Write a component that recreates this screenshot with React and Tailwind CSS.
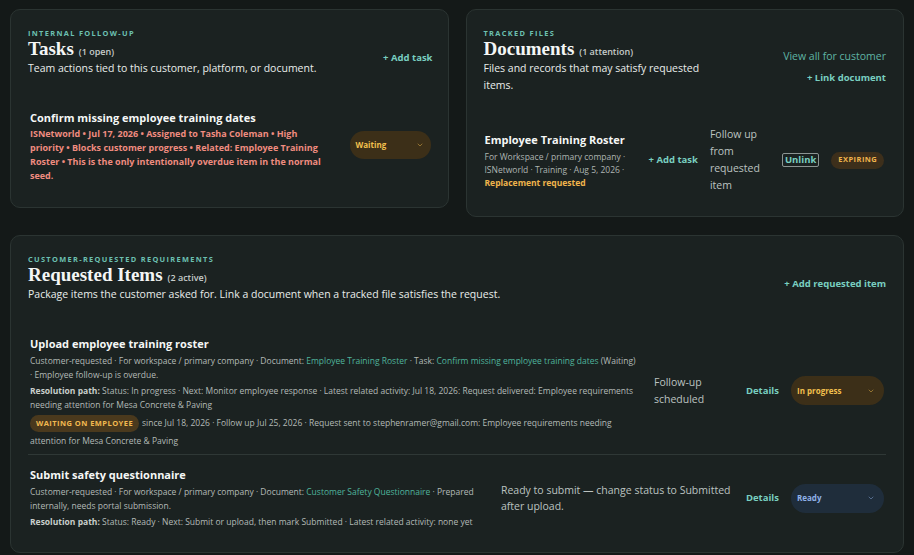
import React from 'react';
import { ChevronDown } from 'lucide-react';

const sans = "font-['Open_Sans','Noto_Sans',sans-serif]";
const serif = "font-['Liberation_Serif','Times_New_Roman',serif]";

const Eyebrow = ({ children }) => (
    <div className="text-[7.4px] leading-[10px] font-bold uppercase tracking-[0.18em] text-[#6cc0b1]">{children}</div>
);

const CardTitle = ({ title, count }) => (
    <div className="flex items-baseline gap-[5px]">
        <h2 className={`${serif} text-[19px] leading-[22px] font-bold text-[#f4f6f5]`}>{title}</h2>
        <span className="text-[9px] font-semibold text-[#c7cdcb]">{count}</span>
    </div>
);

const ActionLink = ({ children, className = '' }) => (
    <button className={`text-[9.5px] leading-[14px] font-bold text-[#79cfc0] whitespace-nowrap ${className}`}>{children}</button>
);

const StatusSelect = ({ label, tone }) => {
    const styles = {
        amber: 'bg-[#3c2f18] text-[#f3c04e]',
        blue: 'bg-[#1f2d3b] text-[#8fb1e8]',
    };
    return (
        <button className={`h-[29px] w-[93px] shrink-0 rounded-full flex items-center justify-between pl-[6px] pr-[9px] text-[8px] font-bold ${styles[tone]}`}>
            <span>{label}</span>
            <ChevronDown size={8} strokeWidth={2} className="opacity-70" />
        </button>
    );
};

const Card = ({ children, className = '' }) => (
    <section className={`rounded-[10px] border border-[#2b3432] bg-[#1b2221] px-[17px] pt-[18px] ${className}`}>
        {children}
    </section>
);

const Link = ({ children }) => <span className="text-[#4fb49c]">{children}</span>;

export default function App() {
    return (
        <div className={`${sans} min-h-screen w-full bg-[#141918] px-[10px] pt-[9px] pb-[4px] text-[#e9edeb]`}>
            <div className="grid grid-cols-2 gap-x-[17px] items-start">
                {/* tasks */}
                <Card className="pb-[12px] pr-[15px]">
                    <div className="flex justify-between items-start">
                        <div>
                            <Eyebrow>Internal follow-up</Eyebrow>
                            <CardTitle title="Tasks" count="(1 open)" />
                            <p className="text-[10.5px] leading-[17px] text-[#e9edeb]">Team actions tied to this customer, platform, or document.</p>
                        </div>
                        <ActionLink className="mt-[23px]">+ Add task</ActionLink>
                    </div>
                    <div className="mt-[21px]">
                        <div className="flex items-center gap-[24px] px-[2px] py-[12px]">
                            <div className="flex-1 min-w-0">
                                <div className="text-[11px] leading-[16px] font-bold text-[#f5f7f6]">Confirm missing employee training dates</div>
                                <p className="mt-[1px] text-[9px] leading-[14px] font-bold text-[#f08c80]">
                                    ISNetworld • Jul 17, 2026 • Assigned to Tasha Coleman • High priority • Blocks customer progress • Related: Employee Training Roster • This is the only intentionally overdue item in the normal seed.
                                </p>
                            </div>
                            <button className="h-[28px] w-[81px] shrink-0 -mt-[3px] rounded-full flex items-center justify-between pl-[6px] pr-[7px] text-[8px] font-bold bg-[#3c2f18] text-[#f3c04e]">
                                <span>Waiting</span>
                                <ChevronDown size={8} strokeWidth={2} className="opacity-70" />
                            </button>
                        </div>
                    </div>
                </Card>

                {/* documents */}
                <Card className="pb-[10px]">
                    <div className="flex justify-between items-start">
                        <div>
                            <Eyebrow>Tracked files</Eyebrow>
                            <CardTitle title="Documents" count="(1 attention)" />
                            <p className="max-w-[220px] text-[10.5px] leading-[17px] text-[#e9edeb]">Files and records that may satisfy requested items.</p>
                        </div>
                        <div className="mt-[20px] flex flex-col items-end">
                            <a className="text-[10.5px] leading-[16px] text-[#5fb4a4]">View all for customer</a>
                            <ActionLink className="mt-[7px]">+ Link document</ActionLink>
                        </div>
                    </div>
                    <div className="mt-[20px]">
                        <div className="flex items-center gap-[12px] pl-[1px] pr-[2px] py-[12px]">
                            <div className="w-[152px] shrink-0">
                                <div className="text-[11px] leading-[16px] font-bold text-[#f5f7f6]">Employee Training Roster</div>
                                <p className="mt-[2px] text-[8.5px] leading-[13px] text-[#aeb5b2]">
                                    For Workspace / primary company · ISNetworld · Training · Aug 5, 2026 · <span className="font-bold text-[#f0b44c]">Replacement requested</span>
                                </p>
                            </div>
                            <ActionLink>+ Add task</ActionLink>
                            <p className="w-[60px] shrink-0 text-[10.5px] leading-[17px] text-[#bcc3c0]">Follow up from requested item</p>
                            <button className="shrink-0 border border-[#8b9492] rounded-[2px] px-[2px] text-[9.5px] leading-[12px] font-bold text-[#79cfc0]">Unlink</button>
                            <span className="ml-auto shrink-0 h-[17px] rounded-full bg-[#3d2f1b] px-[7px] flex items-center text-[7.5px] font-bold tracking-[0.06em] text-[#f0b44c]">EXPIRING</span>
                        </div>
                    </div>
                </Card>
            </div>

            {/* requested items */}
            <Card className="mt-[18px] pb-[17px]">
                <div className="flex justify-between items-start">
                    <div>
                        <Eyebrow>Customer-requested requirements</Eyebrow>
                        <CardTitle title="Requested Items" count="(2 active)" />
                        <p className="text-[10.5px] leading-[17px] text-[#e9edeb]">Package items the customer asked for. Link a document when a tracked file satisfies the request.</p>
                    </div>
                    <ActionLink className="mt-[23px]">+ Add requested item</ActionLink>
                </div>

                <div className="mt-[22px]">
                    <div className="flex items-center gap-[12px] px-[2px] pt-[11px] pb-[4px]">
                        <div className="flex-1 min-w-0 pr-[4px]">
                            <div className="text-[11px] leading-[16px] font-bold text-[#f5f7f6]">Upload employee training roster</div>
                            <p className="mt-[2px] text-[8.5px] leading-[14px] text-[#b3bab7]">
                                Customer-requested · For workspace / primary company · Document: <Link>Employee Training Roster</Link> · Task: <Link>Confirm missing employee training dates</Link> (Waiting) · Employee follow-up is overdue.
                            </p>
                            <p className="mt-[2px] text-[8.5px] leading-[14px] text-[#b3bab7]">
                                <span className="font-bold text-[#c9cfcc]">Resolution path:</span> Status: In progress · Next: Monitor employee response · Latest related activity: Jul 18, 2026: Request delivered: Employee requirements needing attention for Mesa Concrete &amp; Paving
                            </p>
                            <p className="mt-[2px] text-[8.5px] leading-[18px] text-[#b3bab7]">
                                <span className="inline-block align-middle h-[17px] leading-[17px] rounded-full bg-[#4a391d] px-[6px] mr-[3px] text-[7.5px] font-bold tracking-[0.06em] text-[#f2b950]">WAITING ON EMPLOYEE</span>
                                since Jul 18, 2026 · Follow up Jul 25, 2026 · Request sent to stephenramer@gmail.com: Employee requirements needing attention for Mesa Concrete &amp; Paving
                            </p>
                        </div>
                        <div className="flex items-center gap-[12px] -mt-[5px]">
                            <p className="w-[80px] shrink-0 text-[10.5px] leading-[17px] text-[#bcc3c0]">Follow-up scheduled</p>
                            <ActionLink>Details</ActionLink>
                            <StatusSelect label="In progress" tone="amber" />
                        </div>
                    </div>

                    <div className="border-t border-[#2f3836] flex items-center gap-[12px] px-[2px] pt-[12px] pb-[6px]">
                        <div className="flex-1 min-w-0">
                            <div className="text-[11px] leading-[16px] font-bold text-[#f5f7f6]">Submit safety questionnaire</div>
                            <p className="mt-[2px] text-[8.5px] leading-[14px] text-[#b3bab7]">
                                Customer-requested · For workspace / primary company · Document: <Link>Customer Safety Questionnaire</Link> · Prepared internally, needs portal submission.
                            </p>
                            <p className="mt-[2px] text-[8.5px] leading-[14px] text-[#b3bab7]">
                                <span className="font-bold text-[#c9cfcc]">Resolution path:</span> Status: Ready · Next: Submit or upload, then mark Submitted · Latest related activity: none yet
                            </p>
                        </div>
                        <p className="w-[233px] shrink-0 text-[10.5px] leading-[16px] text-[#bcc3c0]">Ready to submit — change status to Submitted after upload.</p>
                        <ActionLink>Details</ActionLink>
                        <StatusSelect label="Ready" tone="blue" />
                    </div>
                </div>
            </Card>
        </div>
    );
}
